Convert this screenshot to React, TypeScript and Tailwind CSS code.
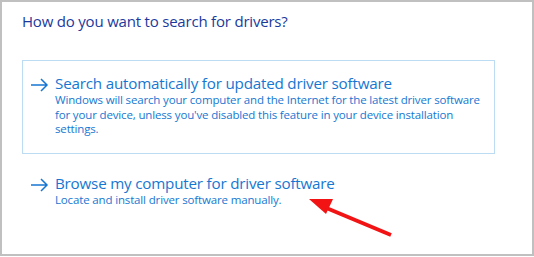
import React from "react";

const font = { fontFamily: '"Segoe UI", "Open Sans", "Noto Sans", sans-serif' };

function Arrow() {
    return (
        <svg width="19" height="14" viewBox="0 0 19 14" className="shrink-0 mt-[5px]">
            <path d="M1 7h16M11 1l6 6-6 6" fill="none" stroke="#1677d2" strokeWidth="1.5" />
        </svg>
    );
}

function Option({ title, text, boxed }: { title: string; text: string; boxed?: boolean }) {
    return (
        <div
            className={
                boxed
                    ? "w-[473px] h-[94px] border border-[#bcdcf4] flex gap-[6px] pl-[7px] pt-[12px]"
                    : "w-[473px] flex gap-[6px] pl-[8px] pt-[19px]"
            }
        >
            <Arrow />
            <div className="flex flex-col">
                <div className="text-[15.2px] leading-[20px] text-[#1677d2] tracking-[-0.2px]">{title}</div>
                <div className="text-[11.5px] leading-[14.5px] text-[#1677d2] w-[430px] tracking-[-0.15px]">{text}</div>
            </div>
        </div>
    );
}

export default function App() {
    return (
        <div style={font} className="relative w-[534px] h-[256px] border-2 border-[#c0c0c0] bg-white">
            <div className="pl-[20px] pt-[8px] text-[15px] leading-[22px] text-[#1b3a9c] tracking-[-0.2px]">
                How do you want to search for drivers?
            </div>
            <div className="pl-[20px] pt-[28px] flex flex-col">
                <Option
                    boxed
                    title="Search automatically for updated driver software"
                    text="Windows will search your computer and the Internet for the latest driver software for your device, unless you've disabled this feature in your device installation settings."
                />
                <Option title="Browse my computer for driver software" text="Locate and install driver software manually." />
            </div>
            {/* red annotation arrow */}
            <svg className="absolute left-0 top-0" width="534" height="256" viewBox="0 0 534 256">
                <line x1="389" y1="233" x2="322" y2="205" stroke="#f21414" strokeWidth="4" />
                <polygon points="307,197 331,197 324,212" fill="#f21414" />
            </svg>
        </div>
    );
}
